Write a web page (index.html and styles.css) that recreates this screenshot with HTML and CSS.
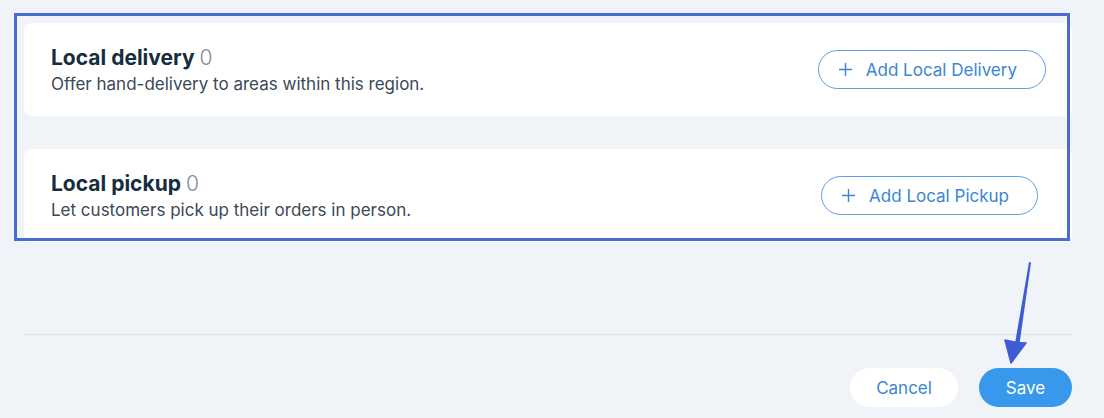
FILE: index.html
```html
<!DOCTYPE html>
<html lang="en">
<head>
    <meta charset="UTF-8">
    <meta name="viewport" content="width=device-width, initial-scale=1.0">
    <title>Shipping &amp; Delivery</title>
    <link rel="stylesheet" href="styles.css">
</head>
<body>
    <div class="page">
        <div class="methods">
            <div class="method-card">
                <div class="method-info">
                    <h3 class="method-title">Local delivery <span class="method-count">0</span></h3>
                    <p class="method-desc">Offer hand-delivery to areas within this region.</p>
                </div>
                <button class="outline-btn" type="button">
                    <svg class="plus-icon" width="15" height="15" viewBox="0 0 15 15"><path d="M7.5 1v13M1 7.5h13" stroke="currentColor" stroke-width="1.4" fill="none"/></svg>
                    Add Local Delivery
                </button>
            </div>
            <div class="method-card method-card-pickup">
                <div class="method-info">
                    <h3 class="method-title">Local pickup <span class="method-count">0</span></h3>
                    <p class="method-desc">Let customers pick up their orders in person.</p>
                </div>
                <button class="outline-btn" type="button">
                    <svg class="plus-icon" width="15" height="15" viewBox="0 0 15 15"><path d="M7.5 1v13M1 7.5h13" stroke="currentColor" stroke-width="1.4" fill="none"/></svg>
                    Add Local Pickup
                </button>
            </div>
        </div>

        <div class="divider"></div>

        <div class="footer">
            <button class="cancel-btn" type="button">Cancel</button>
            <button class="save-btn" type="button">Save</button>
        </div>
    </div>

    <!-- annotation overlay -->
    <div class="highlight"></div>
    <svg class="arrow" width="40" height="110" viewBox="0 0 40 110">
        <path d="M29 2 L31 2.5 L19.5 84 L15 83.5 Z" fill="#3f5bd6"/>
        <path d="M5 80 L17 82.5 L26 83 L11 103 Z" fill="#3f5bd6" stroke="#3f5bd6" stroke-width="1.5" stroke-linejoin="round"/>
    </svg>
</body>
</html>
```

FILE: styles.css
```css
body {
    margin: 0;
    padding: 0;
    background: #f0f4f8;
    font-family: 'Inter', 'Noto Sans', sans-serif;
    color: #162d3d;
}

.page {
    padding: 23px 32px 0 24px;
}

.methods {
    display: flex;
    flex-direction: column;
    gap: 33px;
}

.method-card {
    height: 93px;
    box-sizing: border-box;
    background: #fff;
    border-radius: 8px;
    display: flex;
    align-items: center;
    justify-content: space-between;
    padding: 0 26px 0 27px;
}

.method-card-pickup .outline-btn {
    margin-right: 8px;
}

.method-title {
    margin: 0;
    font-size: 21px;
    line-height: 25px;
    font-weight: 700;
    color: #162d3d;
}

.method-count {
    font-weight: 300;
    color: #7f8c99;
}

.method-desc {
    margin: 3px 0 0;
    font-size: 17px;
    line-height: 22px;
    color: #3b4857;
}

.outline-btn {
    height: 39px;
    display: flex;
    align-items: center;
    gap: 13px;
    padding: 0 28px 0 19px;
    background: #fff;
    border: 1px solid #5a9fe4;
    border-radius: 20px;
    color: #3a86d4;
    font-family: inherit;
    font-size: 17px;
    cursor: pointer;
}

.plus-icon {
    display: block;
}

.divider {
    margin-top: 92px;
    border-top: 1px solid #dde2e8;
}

.footer {
    display: flex;
    justify-content: flex-end;
    gap: 21px;
    margin-top: 33px;
}

.cancel-btn, .save-btn {
    height: 39px;
    border: none;
    border-radius: 20px;
    font-family: inherit;
    font-size: 17px;
    cursor: pointer;
}

.cancel-btn {
    width: 108px;
    background: #fff;
    color: #3a86d4;
}

.save-btn {
    width: 93px;
    background: #3899ec;
    color: #fff;
}

.highlight {
    position: absolute;
    left: 14px;
    top: 13px;
    width: 1056px;
    height: 228px;
    box-sizing: border-box;
    border: 3px solid #4a6bd0;
    pointer-events: none;
}

.arrow {
    position: absolute;
    left: 1000px;
    top: 260px;
}
```
